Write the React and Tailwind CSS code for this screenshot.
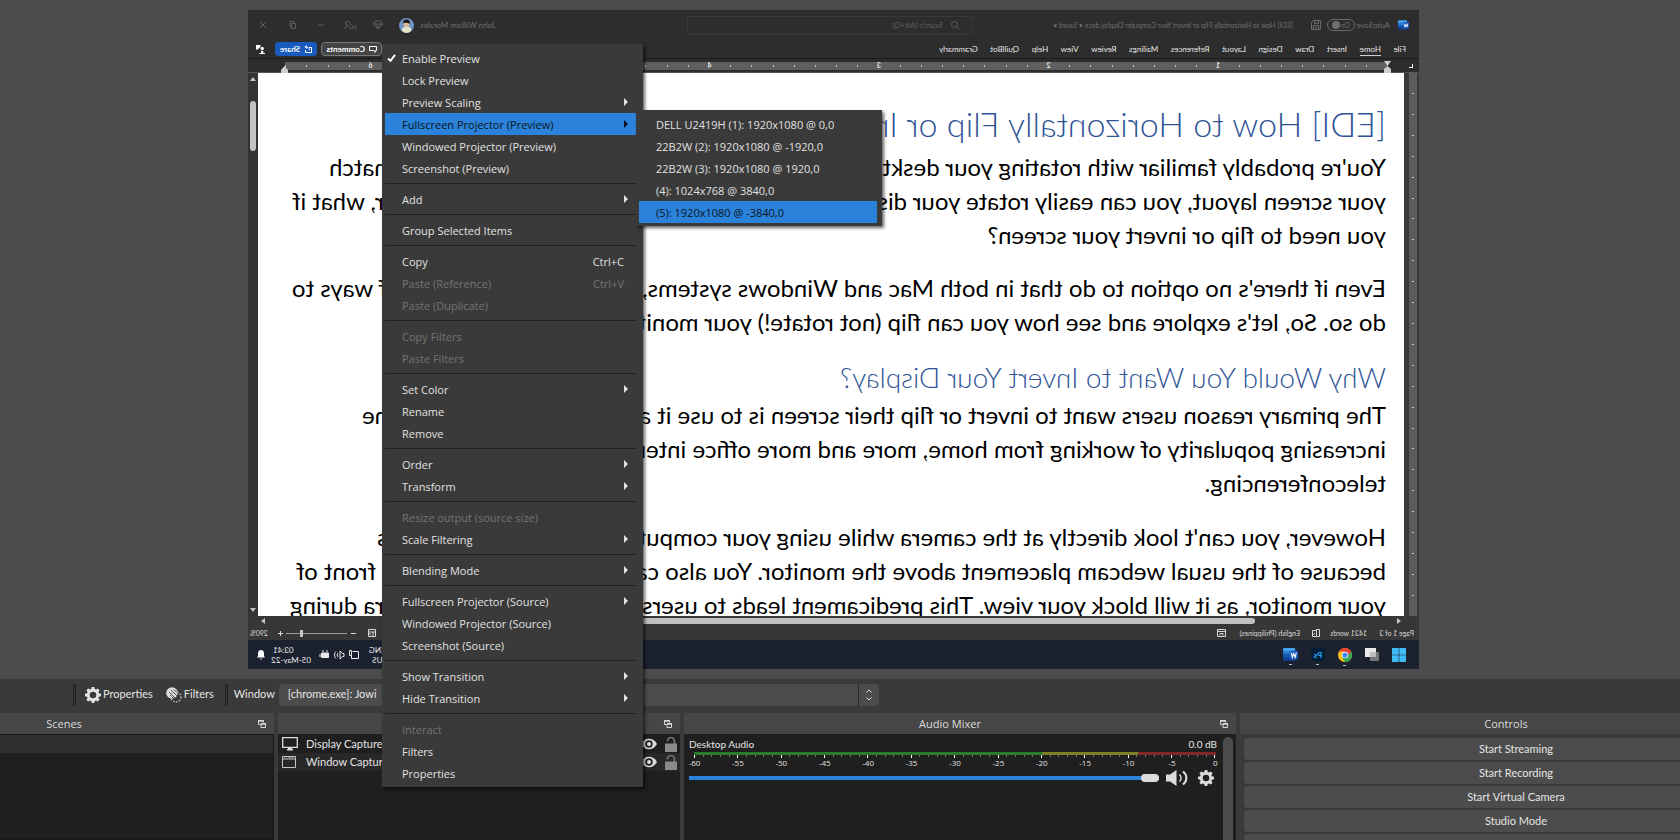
import { useState } from 'react'

const MENU = [
  [
    { label: 'Enable Preview', checked: true },
    { label: 'Lock Preview' },
    { label: 'Preview Scaling', sub: true },
    { label: 'Fullscreen Projector (Preview)', sub: true, active: true },
    { label: 'Windowed Projector (Preview)' },
    { label: 'Screenshot (Preview)' },
  ],
  [{ label: 'Add', sub: true }],
  [{ label: 'Group Selected Items' }],
  [
    { label: 'Copy', keys: 'Ctrl+C' },
    { label: 'Paste (Reference)', keys: 'Ctrl+V', disabled: true },
    { label: 'Paste (Duplicate)', disabled: true },
  ],
  [
    { label: 'Copy Filters', disabled: true },
    { label: 'Paste Filters', disabled: true },
  ],
  [{ label: 'Set Color', sub: true }, { label: 'Rename' }, { label: 'Remove' }],
  [{ label: 'Order', sub: true }, { label: 'Transform', sub: true }],
  [
    { label: 'Resize output (source size)', disabled: true },
    { label: 'Scale Filtering', sub: true },
  ],
  [{ label: 'Blending Mode', sub: true }],
  [
    { label: 'Fullscreen Projector (Source)', sub: true },
    { label: 'Windowed Projector (Source)' },
    { label: 'Screenshot (Source)' },
  ],
  [{ label: 'Show Transition', sub: true }, { label: 'Hide Transition', sub: true }],
  [{ label: 'Interact', disabled: true }, { label: 'Filters' }, { label: 'Properties' }],
]

const DISPLAYS = [
  'DELL U2419H (1): 1920x1080 @ 0,0',
  '22B2W (2): 1920x1080 @ -1920,0',
  '22B2W (3): 1920x1080 @ 1920,0',
  '(4): 1024x768 @ 3840,0',
  '(5): 1920x1080 @ -3840,0',
]

const TABS = ['File', 'Home', 'Insert', 'Draw', 'Design', 'Layout', 'References', 'Mailings', 'Review', 'View', 'Help', 'QuillBot', 'Grammarly']

const CONTROLS = ['Start Streaming', 'Start Recording', 'Start Virtual Camera', 'Studio Mode', 'Settings']

/* ---------- icons ---------- */

function Gear({ className }) {
  return (
    <svg className={className} viewBox="0 0 16 16" fill="currentColor">
      <path
        fillRule="evenodd"
        d="M6.7 0h2.6l.4 2.1 1.3.5 1.8-1.2 1.8 1.8-1.2 1.8.5 1.3 2.1.4v2.6l-2.1.4-.5 1.3 1.2 1.8-1.8 1.8-1.8-1.2-1.3.5-.4 2.1H6.7l-.4-2.1-1.3-.5-1.8 1.2-1.8-1.8 1.2-1.800-.5-1.3L0 9.300V6.700l2.1-.4.5-1.300-1.200-1.800 1.800-1.800L5 2.600l1.300-.5zM8 4.700a3.300 3.300 0 1 0 0 6.600 3.300 3.300 0 0 0 0-6.600z"
      />
    </svg>
  )
}

function FiltersIcon() {
  return (
    <svg className="h-4 w-4" viewBox="0 0 16 16">
      <circle cx="6" cy="6" r="5.8" fill="#dcdcdc" />
      <path d="M3 5l6 6M5 3l7 7M4 8l4 4M8 2.5l5 5" stroke="#3a3a3a" strokeWidth="0.9" />
      <circle cx="10" cy="10" r="5" fill="none" stroke="#c4c4c4" strokeWidth="1.3" strokeDasharray="1.5 1.5" />
    </svg>
  )
}

function PopOut() {
  return (
    <svg className="h-2 w-2" viewBox="0 0 8 8" fill="none" stroke="#d8d8d8">
      <path d="M2.5 4.5h-2v-4h5v2" />
      <path d="M0 1h6" strokeWidth="1.5" />
      <path d="M3 3.5h4.5v4H3z" />
      <path d="M3 4h5" strokeWidth="1.5" />
    </svg>
  )
}

function Eye() {
  return (
    <svg className="h-4 w-4" viewBox="0 0 16 16">
      <path d="M0 8c2-3.600 4.800-5.200 8-5.200S14 4.400 16 8c-2 3.600-4.800 5.200-8 5.200S2 11.600 0 8z" fill="#dcdcdc" />
      <circle cx="8" cy="8" r="3.7" fill="#1f1f1f" />
      <circle cx="8" cy="8" r="2" fill="#dcdcdc" />
    </svg>
  )
}

function Lock() {
  return (
    <svg className="h-[15px] w-3" viewBox="0 0 12 15">
      <path d="M2.5 4.5V4a3.300 3.300 0 0 1 6.900 0v3" fill="none" stroke="#7a7a7a" strokeWidth="1.6" />
      <path d="M0 6.5h12V15H0z" fill="#8a8a8a" />
    </svg>
  )
}

function MonitorIcon() {
  return (
    <svg className="h-[14px] w-4" viewBox="0 0 16 14" fill="none" stroke="#dcdcdc">
      <path d="M.7.7h14.6v9.600H.7z" strokeWidth="1.3" />
      <path d="M5 12.8h6M6 11.5h4" strokeWidth="1.4" />
    </svg>
  )
}

function WindowIcon() {
  return (
    <svg className="h-3 w-[14px]" viewBox="0 0 14 12" fill="none" stroke="#c8c8c8">
      <path d="M.5.5h13v11H.5zM.5 3h13" />
      <path d="M2 1.8h1M4 1.8h1M6 1.8h6" stroke="#8a8a8a" />
    </svg>
  )
}

function Speaker() {
  return (
    <svg className="h-4 w-[22px]" viewBox="0 0 22 16" fill="none" stroke="#dcdcdc">
      <path d="M0 4.5h4L10.5 0v16L4 11.5H0z" fill="#dcdcdc" stroke="none" />
      <path d="M13.5 4.5c2 2 2 5 0 7" strokeWidth="1.6" />
      <path d="M17 1.5c4.500 3.500 4.500 9.500 0 13" strokeWidth="2" />
    </svg>
  )
}

function WordLogo({ className }) {
  return (
    <svg className={className} viewBox="0 0 16 14">
      <path d="M4 0h11a1 1 0 0 1 1 1v3H3V1a1 1 0 0 1 1-1z" fill="#41a5ee" />
      <path d="M3 3.5h13V7H3z" fill="#2b7cd3" />
      <path d="M3 7h13v3.5H3z" fill="#185abd" />
      <path d="M3 10.5h13V13a1 1 0 0 1-1 1H4a1 1 0 0 1-1-1z" fill="#103f91" />
      <rect y="3" width="9" height="9" rx="1" fill="#185abd" />
      <path d="M1.700 5l1.300 5 1.500-4L6 10l1.300-5" fill="none" stroke="#fff" strokeWidth="1.2" />
    </svg>
  )
}

function Chrome() {
  return (
    <svg className="h-[14px] w-[14px]" viewBox="0 0 16 16">
      <circle cx="8" cy="8" r="8" fill="#fbc116" />
      <path d="M8 8L1.070 4A8 8 0 0 0 8 16l4-6z" fill="#34a853" />
      <path d="M1.070 4A8 8 0 0 1 14.930 4H8v4H3.500z" fill="#ea4335" />
      <circle cx="8" cy="8" r="3.8" fill="#fff" />
      <circle cx="8" cy="8" r="3" fill="#4285f4" />
    </svg>
  )
}

/* ---------- flipped Word window ---------- */

function TitleBar() {
  return (
    <div className="flex h-[30px] items-center pl-[10px] pr-[11px] text-[8px] text-[#6f6f6f]">
      <WordLogo className="h-[10px] w-[11px]" />
      <span className="ml-2 w-[31px]">AutoSave</span>
      <button className="ml-1 flex h-3 w-7 items-center justify-between rounded-full border border-[#6a6a6a] px-1 text-[7px]">
        On
        <span className="h-2 w-2 rounded-full bg-[#6f6f6f]" />
      </button>
      <svg className="ml-[6px] h-[10px] w-[10px]" viewBox="0 0 10 10" fill="none" stroke="#6a6a6a">
        <path d="M.5.5h7l2 2v7h-9zM2.5.5v3h4v-3M2.5 9.5v-4h5v4M4 7.5h2" />
      </svg>
      <span className="ml-[18px] w-[254px] text-[7px]">
        [EDI] How to Horizontally Flip or Invert Your Computer Display.docx • Saved ▾
      </span>
      <label className="ml-[66px] flex h-[19px] w-[286px] items-center gap-2 border border-[#383838] pl-3">
        <svg className="h-[9px] w-[9px]" viewBox="0 0 9 9" fill="none" stroke="#5c5c5c">
          <circle cx="5.5" cy="3.5" r="3" />
          <path d="M3.5 5.5l-3 3" />
        </svg>
        <input className="w-40 bg-transparent placeholder:text-[#5c5c5c]" placeholder="Search (Alt+Q)" aria-label="Search" />
      </label>
      <span className="ml-auto">John William Morales</span>
      <svg className="ml-[6px] h-[15px] w-[15px]" viewBox="0 0 14 14">
        <circle cx="7" cy="7" r="7" fill="#6f94c8" />
        <path d="M2.500 12c0-3 2-4 4.500-4s4.500 1 4.500 4A7 7 0 0 1 7 14a7 7 0 0 1-4.500-2z" fill="#e8e2cc" />
        <circle cx="7" cy="5.5" r="2.7" fill="#e0bd98" />
        <path d="M3.700 5.500C3.500 0 10.500 0 10.300 5.500 9.500 3.800 6 4.500 3.700 5.500z" fill="#17130f" />
      </svg>
      <svg className="ml-4 h-[10px] w-[124px]" viewBox="0 0 124 10" fill="none" stroke="#5e5e5e">
        <path d="M2 1h6l2 3-5 5-5-5zM0 4h10M3 4l2 5 2-5" />
        <path d="M29 8l6-7 3 2-6 6zM28 5l-1 4M36 5l2 4" />
        <path d="M59 5h6" />
        <path d="M87.5 3.5h4v5h-4zM89 3.5v-2h4v5h-1.500" />
        <path d="M117 2l6 6M123 2l-6 6" />
      </svg>
    </div>
  )
}

function RibbonTabs() {
  return (
    <div className="flex h-[18px] items-center pl-[13px] pr-2 text-[8px] text-[#e6e6e6]">
      <nav className="flex w-[467px] justify-between">
        {TABS.map(t => (
          <a key={t} href="#" className={t === 'Home' ? 'border-b border-[#cfcfcf]' : 'border-b border-transparent'}>
            {t}
          </a>
        ))}
      </nav>
      <button className="ml-auto flex h-[14px] w-[61px] items-center gap-1 rounded-sm border border-[#7a7a7a] bg-[#444] pl-1 font-bold text-white">
        <svg className="h-[7px] w-2" viewBox="0 0 8 7" fill="none" stroke="#fff">
          <path d="M.5.5h7v4h-4l-1.500 2v-2H.5z" />
        </svg>
        Comments
      </button>
      <button className="ml-1 flex h-[14px] w-[42px] items-center gap-1 rounded-sm bg-[#185abd] pl-[5px] font-bold text-white">
        <svg className="h-2 w-2" viewBox="0 0 8 8" fill="none" stroke="#fff">
          <path d="M3 2.5H.5v5h6V5M2.5 5c0-2 1.500-3 4-3M5 .5L7 2 5 3.700" />
        </svg>
        Share
      </button>
      <svg className="ml-[10px] h-[9px] w-[9px]" viewBox="0 0 8 8" fill="#fff">
        <circle cx="2.5" cy="3" r="1.5" />
        <path d="M0 8V7h1.500V5h2v2H5v1zM4 0h4v4H6.500L4 1.500z" />
      </svg>
    </div>
  )
}

function Ruler() {
  return (
    <div className="flex h-[15px] items-center border-y border-t-[#1c1c1c] border-b-[#555] text-[7px] leading-none text-[#e8e8e8]">
      <span className="ml-[6px] h-1 w-1 border-b border-l border-white" />
      <div className="relative ml-[22px] h-[8px] w-[1102px] bg-[#5f5f5f]">
        <svg className="absolute -left-1 -top-px h-3 w-[7px]" viewBox="0 0 7 12" fill="#cfcfcf">
          <path d="M0 0h7L3.500 5zM3.500 5L7 8v4H0V8z" />
        </svg>
        <div className="flex h-full items-center">
          {Array.from({ length: 52 }, (_, i) => (
            <span key={i} className="flex flex-1 justify-end">
              <span className="flex w-px justify-center">
                {(i + 1) % 8 === 0 ? <b>{(i + 1) / 8}</b> : <i className="h-[2px] w-px shrink-0 bg-[#c8c8c8]" />}
              </span>
            </span>
          ))}
        </div>
        <svg className="absolute -right-1 top-[3px] h-2 w-[7px]" viewBox="0 0 7 8" fill="#cfcfcf">
          <path d="M3.500 1L7 5v3H0V5z" />
        </svg>
      </div>
    </div>
  )
}

// A document line: the head and the tail of the sentence, the menu hangs over the middle.
function Line({ head, tail, className }) {
  return (
    <div className={`flex justify-between overflow-hidden whitespace-nowrap ${className || ''}`}>
      <span>{head}</span>
      {tail && <span>{tail}</span>}
    </div>
  )
}

function Page() {
  return (
    <div className="min-w-0 flex-1 overflow-hidden bg-white pl-[18px] pt-[27px] text-[24px] leading-[34px] text-black">
      <h1 className="whitespace-nowrap pb-[2px] text-[34px] font-light leading-[48px] text-[#2f5496]">
        [EDI] How to Horizontally Flip or Invert
      </h1>
      <Line head="You're probably familiar with rotating your desktop" tail="to match" className="pr-[71px]" />
      <Line head="your screen layout, you can easily rotate your display" tail="However, what if" className="pr-[34px]" />
      <Line head="you need to flip or invert your screen?" />
      <div className="mt-[19px]">
        <Line head="Even if there's no option to do that in both Mac and Windows systems," tail="of ways to" className="pr-[34px]" />
        <Line head="do so. So, let's explore and see how you can flip (not rotate!) your monitor." />
      </div>
      <h2 className="mb-1 mt-[21px] whitespace-nowrap text-[28px] font-light leading-[34px] text-[#2f5496]">
        Why Would You Want to Invert Your Display?
      </h2>
      <Line head="The primary reason users want to invert or flip their screen is to use it as" tail="the" className="pr-[104px]" />
      <Line head="increasing popularity of working from home, more and more office interact" />
      <Line head="teleconferencing." />
      <div className="mt-5">
        <Line head="However, you can't look directly at the camera while using your computer" tail="is" className="pr-[119px]" />
        <Line head="because of the usual webcam placement above the monitor. You also can't" tail="front of" className="pr-[38px]" />
        <Line head="your monitor, as it will block your view. This predicament leads to users" tail="camera during" className="pr-[32px]" />
      </div>
    </div>
  )
}

function StatusBar() {
  return (
    <div className="flex h-[14px] items-center pl-[5px] pr-[2px] text-[7px] text-[#d8d8d8]">
      <span className="w-[47px]">Page 1 of 3</span>
      <span className="w-[47px]">1431 words</span>
      <svg className="h-2 w-2" viewBox="0 0 8 8" fill="none" stroke="#d8d8d8">
        <path d="M.5.5h3v7h-3zM3.5 1.5h4v6h-4M5 4l2 2" />
      </svg>
      <span className="ml-3 w-[74px]">English (Philippines)</span>
      <svg className="h-2 w-[9px]" viewBox="0 0 9 8" fill="none" stroke="#d8d8d8">
        <path d="M.5.5h8v7h-8zM.5 2.5h8M3 6.5v-2h3v2" />
      </svg>
      <svg className="ml-auto h-2 w-2" viewBox="0 0 8 8" fill="none" stroke="#d8d8d8">
        <path d="M.5.5h7v7h-7zM.5 3h7M3 3v4M5 5h2" />
      </svg>
      <span className="ml-3 h-px w-[5px] bg-[#d8d8d8]" />
      <input
        type="range"
        aria-label="Zoom"
        defaultValue={75}
        className="ml-1 h-2 w-[61px] appearance-none bg-[linear-gradient(#9a9a9a,#9a9a9a)] bg-[length:100%_1px] bg-center bg-no-repeat [&::-webkit-slider-thumb]:h-[7px] [&::-webkit-slider-thumb]:w-[3px] [&::-webkit-slider-thumb]:appearance-none [&::-webkit-slider-thumb]:bg-[#c4c4c4]"
      />
      <svg className="ml-[3px] h-[5px] w-[5px]" viewBox="0 0 5 5" stroke="#d8d8d8">
        <path d="M0 2.5h5M2.5 0v5" />
      </svg>
      <span className="ml-[10px]">290%</span>
    </div>
  )
}

function TaskIcon({ children }) {
  return (
    <span className="relative">
      {children}
      <span className="absolute -bottom-1 left-[6px] h-px w-[3px] bg-[#b8b8b8]" />
    </span>
  )
}

function Taskbar() {
  return (
    <div className="flex h-[29px] items-center bg-[#1c2130] pl-[13px] pr-[9px] text-[8px] leading-[10px] text-[#eaeaea]">
      <div className="flex items-center gap-[13px]">
        <svg className="h-[14px] w-[14px]" viewBox="0 0 14 14" fill="#3fbcf5">
          <path d="M0 0h6.700v6.700H0zM7.300 0H14v6.700H7.300zM0 7.300h6.700V14H0zM7.300 7.300H14V14H7.300z" />
        </svg>
        <svg className="h-[13px] w-[14px]" viewBox="0 0 14 13">
          <path d="M0 4h9v9H0z" fill="#757575" />
          <path d="M3 0h11v9H3z" fill="#e9e9e9" />
          <path d="M3 4h6v5H3z" fill="#bdbdbd" />
        </svg>
        <TaskIcon><Chrome /></TaskIcon>
        <TaskIcon>
          <span className="flex h-[13px] w-[14px] items-center justify-center rounded-sm bg-[#001e36] font-bold text-[#31a8ff]">Ps</span>
        </TaskIcon>
        <TaskIcon><WordLogo className="h-[13px] w-[15px]" /></TaskIcon>
      </div>
      <span className="ml-auto text-center">ENG<br />US</span>
      <svg className="ml-[10px] h-[10px] w-10 shrink-0" viewBox="0 0 40 10" fill="none" stroke="#eaeaea">
        <path d="M.5 1.5h6M.5 1.5v7h7v-3M7.500.5h2v5h-2z" />
        <path d="M15 3.500h1.500L19 1v8l-2.500-2.500H15zM21 3c1 1 1 3 0 4M23 1.500c2 2 2 5 0 7" />
        <path d="M30.5 3h7v4.500h-7z" fill="#eaeaea" />
        <path d="M39 4v3M31 1h2M35 1h2" />
      </svg>
      <span className="ml-2 w-[38px] whitespace-nowrap text-right">03:41<br />05-May-22</span>
      <svg className="ml-2 h-[10px] w-2" viewBox="0 0 8 10" fill="#fff">
        <path d="M4 0c2 0 3 1.500 3 3.500V6l1 1.500H0L1 6V3.500C1 1.500 2 0 4 0zM3 8.500h2L4 10z" />
      </svg>
    </div>
  )
}

function WordWindow() {
  return (
    <div className="flex min-w-0 flex-1 -scale-x-100 flex-col overflow-hidden bg-[#2d2d2d] font-['Lato','Open_Sans',sans-serif]">
      <TitleBar />
      <RibbonTabs />
      <Ruler />
      <div className="flex min-h-0 flex-1">
        <div className="flex w-[15px] shrink-0 flex-col bg-[#383838] pl-[2px]">
          <div className="flex w-2 flex-1 flex-col items-center justify-between bg-[#5c5c5c] py-5">
            {Array.from({ length: 25 }, (_, i) => (
              <i key={i} className="h-px w-[2px] bg-[#c8c8c8]" />
            ))}
          </div>
        </div>
        <Page />
        <div className="flex w-[10px] shrink-0 flex-col items-center bg-[#333] pt-1">
          <svg className="h-1 w-[6px]" viewBox="0 0 6 4" fill="#c4c4c4"><path d="M3 0l3 4H0z" /></svg>
          <span className="mt-5 h-[50px] w-[6px] rounded-full bg-[#c4c4c4]" />
          <svg className="mb-1 mt-auto h-1 w-[6px]" viewBox="0 0 6 4" fill="#c4c4c4"><path d="M3 4l3-4H0z" /></svg>
        </div>
      </div>
      <div className="bg-[#373737]">
        <div className="flex h-[10px] items-center pl-[18px] pr-[13px]">
          <svg className="h-[6px] w-1" viewBox="0 0 4 6" fill="#c4c4c4"><path d="M0 3l4-3v6z" /></svg>
          <span className="ml-[142px] h-[6px] w-[640px] rounded-full bg-[#c0c0c0]" />
          <svg className="ml-auto h-[6px] w-1" viewBox="0 0 4 6" fill="#c4c4c4"><path d="M4 3L0 0v6z" /></svg>
        </div>
        <StatusBar />
      </div>
      <Taskbar />
    </div>
  )
}

/* ---------- context menu ---------- */

function MenuItem({ item }) {
  const color = item.active ? 'bg-[#2a82da] text-[#0b1420]' : item.disabled ? 'text-[#747474]' : 'text-[#e1e1e1]'
  return (
    <li>
      <button disabled={item.disabled} className={`flex h-[22px] w-full items-center pr-2 text-left ${color}`}>
        <span className="w-[17px] pl-[2px]">
          {item.checked && (
            <svg className="h-2 w-[9px]" viewBox="0 0 9 8" fill="none" stroke="#fff" strokeWidth="2">
              <path d="M1 4.500l2.500 2.300L8 .8" />
            </svg>
          )}
        </span>
        <span className="pt-[2px]">{item.label}</span>
        {item.keys && <span className="ml-auto pr-1 pt-[2px]">{item.keys}</span>}
        {item.sub && (
          <svg className="ml-auto h-2 w-1" viewBox="0 0 4 8" fill="currentColor">
            <path d="M0 0l4 4-4 4z" />
          </svg>
        )}
      </button>
    </li>
  )
}

function ContextMenu() {
  const [picked, setPicked] = useState(4)

  return (
    <div className="absolute left-[382px] top-[44px] w-[261px] bg-[#3a3a3a] pb-[3px] pl-[3px] pr-[7px] pt-[3px] text-[11px] shadow-[2px_2px_3px_rgba(0,0,0,0.6)]">
      {MENU.map((group, i) => (
        <ul key={i}>
          {i > 0 && <li className="my-1 h-px bg-[#232323]" />}
          {group.map(item => (
            <MenuItem key={item.label} item={item} />
          ))}
        </ul>
      ))}

      <ul className="absolute left-[254px] top-[66px] w-[246px] bg-[#3a3a3a] pb-[3px] pl-[3px] pr-[5px] pt-[3px] shadow-[2px_2px_3px_rgba(0,0,0,0.6)]">
        {DISPLAYS.map((d, i) => (
          <li key={d}>
            <button
              onClick={() => setPicked(i)}
              className={`flex h-[22px] w-full items-center pl-[17px] pt-[2px] text-left ${
                picked === i ? 'bg-[#2a82da] text-[#0b1420]' : 'text-[#e1e1e1]'
              }`}
            >
              {d}
            </button>
          </li>
        ))}
      </ul>
    </div>
  )
}

/* ---------- docks ---------- */

function Dock({ title, className, children }) {
  return (
    <section className={`flex min-w-0 flex-col ${className}`}>
      <header className="flex h-[21px] shrink-0 items-center bg-[#464646] pr-2 text-[11px] text-[#dcdcdc]">
        <h3 className="flex-1 pt-px text-center">{title}</h3>
        <button aria-label={`Undock ${title}`} className="pl-1"><PopOut /></button>
      </header>
      {children}
    </section>
  )
}

function SourceRow({ icon, name, className }) {
  return (
    <li className={`flex h-[18px] items-center pl-1 pr-[3px] ${className || ''}`}>
      <span className="w-6">{icon}</span>
      {name}
      <button className="ml-auto" aria-label={`Hide ${name}`}><Eye /></button>
      <button className="ml-2" aria-label={`Lock ${name}`}><Lock /></button>
    </li>
  )
}

function Meter() {
  const labels = Array.from({ length: 13 }, (_, i) => (i === 12 ? '0' : String(i * 5 - 60)))
  return (
    <div className="pl-[5px] pr-px">
      <div className="flex h-[3px]">
        <span className="flex-[40] bg-[#2a7d28]" />
        <span className="flex-[11] bg-[#7f7f28]" />
        <span className="flex-[9] bg-[#7f2826]" />
      </div>
      <div className="flex h-[3px] justify-between">
        {Array.from({ length: 61 }, (_, i) => (
          <i key={i} className={i % 5 === 0 ? 'h-[3px] w-px bg-white' : 'h-[2px] w-px bg-[#777]'} />
        ))}
      </div>
      <div className="flex h-[9px] justify-between text-[8px] leading-[9px] text-[#e0e0e0]">
        {labels.map(l => (
          <span key={l} className="flex w-px justify-center">
            <span>{l}</span>
          </span>
        ))}
      </div>
    </div>
  )
}

function AudioMixer() {
  return (
    <div className="flex flex-1 bg-[#1f1f1f] pl-[5px] pr-[3px]">
      <div className="flex-1 pt-[3px]">
        <div className="flex justify-between pb-px font-['Lato'] text-[10px] leading-[14px] text-[#e6e6e6]">
          <label htmlFor="desktop-volume">Desktop Audio</label>
          <span>0.0 dB</span>
        </div>
        <Meter />
        <div className="mt-[3px] flex items-center">
          <input
            id="desktop-volume"
            type="range"
            defaultValue={100}
            className="h-2 min-w-0 flex-1 appearance-none bg-[linear-gradient(#2a82da,#2a82da)] bg-[length:100%_4px] bg-center bg-no-repeat [&::-webkit-slider-thumb]:h-2 [&::-webkit-slider-thumb]:w-[18px] [&::-webkit-slider-thumb]:appearance-none [&::-webkit-slider-thumb]:rounded-sm [&::-webkit-slider-thumb]:bg-[#dcdcdc]"
          />
          <button className="ml-[7px]" aria-label="Mute"><Speaker /></button>
          <button className="ml-[10px] mr-[3px] text-[#dcdcdc]" aria-label="Mixer settings"><Gear className="h-4 w-4" /></button>
        </div>
      </div>
      <span className="ml-[6px] mt-[3px] w-[10px] rounded-t-full bg-[#4c4c4c]" />
    </div>
  )
}

export default function App() {
  return (
    <div className="relative flex h-screen min-h-[840px] flex-col overflow-hidden bg-[#3a3a3a] font-['Open_Sans','Noto_Sans',sans-serif]">
      <main className="flex min-h-0 flex-1 bg-[#4c4c4c] pb-[10px] pl-[248px] pr-[261px] pt-[10px]">
        <WordWindow />
      </main>

      {/* source toolbar */}
      <div className="flex h-[34px] shrink-0 items-center pb-[3px] pl-[73px] font-['Lato'] text-[11px] text-[#e4e4e4]">
        <span className="h-[22px] w-[3px] border-x border-[#1f1f1f]" />
        <button className="ml-[9px] flex items-center gap-[2px]">
          <Gear className="h-4 w-4" />
          Properties
        </button>
        <button className="ml-[13px] flex items-center gap-[2px]">
          <FiltersIcon />
          Filters
        </button>
        <span className="ml-[11px] h-[22px] w-[3px] border-x border-[#1f1f1f]" />
        <label htmlFor="window-select" className="ml-[6px] w-[39px]">Window</label>
        <div className="relative ml-[6px] w-[600px]">
          <select id="window-select" className="h-[22px] w-full appearance-none rounded-sm bg-[#4c4c4c] pl-[9px]">
            <option>[chrome.exe]: Jowi</option>
          </select>
          <span className="pointer-events-none absolute right-0 top-0 flex h-[22px] w-[21px] items-center justify-center border-l border-[#2a2a2a]">
            <svg className="h-3 w-[6px]" viewBox="0 0 6 12" fill="none" stroke="#dcdcdc">
              <path d="M.5 3.500L3 1l2.500 2.500M.5 8.500L3 11l2.500-2.500" />
            </svg>
          </span>
        </div>
      </div>

      {/* docks run past both window edges */}
      <div className="-ml-[126px] -mr-[112px] flex h-[127px] shrink-0 gap-1">
        <Dock title="Scenes" className="w-[400px]">
          <div className="flex-1 border border-[#181818] bg-[#1f1f1f] text-[11px]">
            <div className="h-[18px] bg-[#303030] pl-[95px] leading-[18px] text-[#e0e0e0]">Scene</div>
          </div>
        </Dock>
        <Dock title="Sources" className="flex-[402]">
          <ul className="flex-1 bg-[#1f1f1f] pt-px font-['Lato'] text-[11px] text-[#e4e4e4]">
            <SourceRow icon={<MonitorIcon />} name="Display Capture" />
            <SourceRow icon={<WindowIcon />} name="Window Capture" className="bg-[#282828]" />
          </ul>
        </Dock>
        <Dock title="Audio Mixer" className="flex-[552]">
          <AudioMixer />
        </Dock>
        <Dock title="Controls" className="flex-[552]">
          <div className="flex flex-col gap-[2px] overflow-hidden px-1 pt-1 font-['Lato'] text-[11px] text-[#e4e4e4]">
            {CONTROLS.map(c => (
              <button key={c} className="h-[22px] shrink-0 rounded-sm bg-[#4c4c4c]">{c}</button>
            ))}
          </div>
        </Dock>
      </div>

      <ContextMenu />
    </div>
  )
}
